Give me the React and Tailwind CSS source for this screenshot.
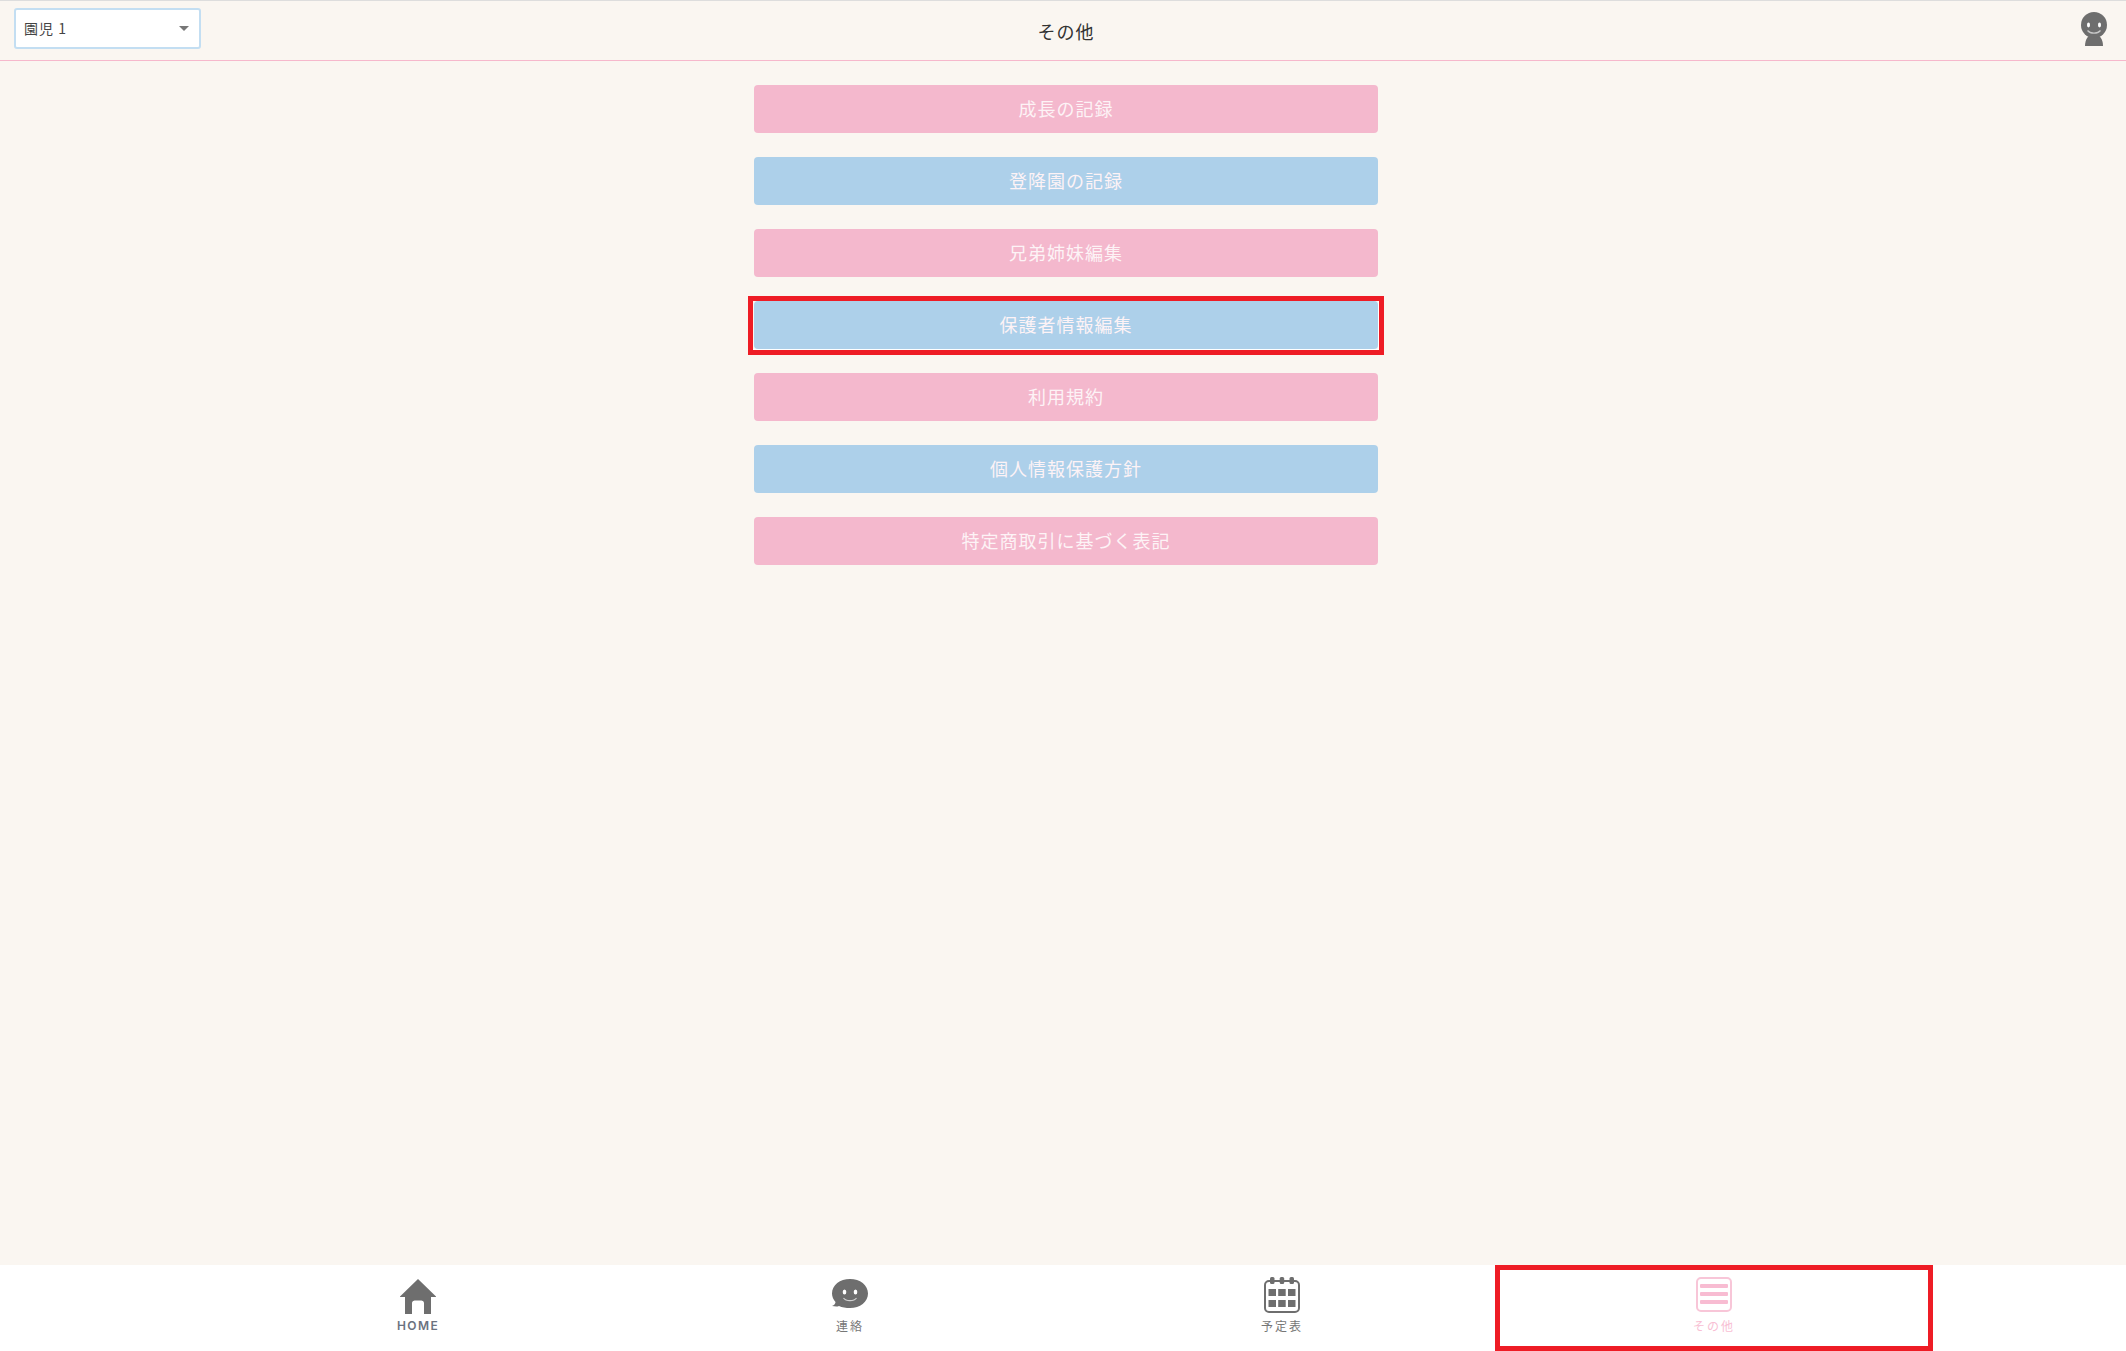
const FONT = "font-['Noto_Sans_CJK_JP','Noto_Sans',sans-serif]";

const buttons = [
  ["成長の記録", "pink"],
  ["登降園の記録", "blue"],
  ["兄弟姉妹編集", "pink"],
  ["保護者情報編集", "blue", true],
  ["利用規約", "pink"],
  ["個人情報保護方針", "blue"],
  ["特定商取引に基づく表記", "pink"],
];

function Avatar() {
  return (
    <svg width="28" height="36" viewBox="0 0 28 36" className="block">
      <path d="M5 34c0-6 3-12 9-12s9 6 9 12z" fill="#6e6e6e" />
      <circle cx="14" cy="13" r="13" fill="#6e6e6e" />
      <ellipse cx="8.5" cy="13" rx="1.5" ry="2.4" fill="#fff" />
      <ellipse cx="19.5" cy="13" rx="1.5" ry="2.4" fill="#fff" />
      <path d="M7.5 18.5c3 3.5 10 3.500 13 0" fill="none" stroke="#c8c8c8" strokeWidth="1.2" />
    </svg>
  );
}

function HomeIcon() {
  return (
    <svg width="36" height="36" viewBox="0 0 36 36" className="block">
      <path fillRule="evenodd" d="M18 0L36 17.5V18H31V35H5V18H0V17.5ZM12 35H24V24C24 22 22 21.500 20 21.500H16C14 21.500 12 22 12 24Z" fill="#6e6e6e" />
    </svg>
  );
}

function ChatIcon() {
  return (
    <svg width="36" height="36" viewBox="0 0 36 36" className="block">
      <path d="M18 1C28 1 36 7 36 15.500C36 24 28 30 18 30C14 30 10 29.500 7 28C5 28.800 3 28.500 0 28C2.500 27 3.500 25.500 3.500 24C1.300 21.500 0 18.700 0 15.500C0 7 8 1 18 1Z" fill="#6e6e6e" />
      <ellipse cx="12.500" cy="14" rx="1.800" ry="2.500" fill="#fff" />
      <ellipse cx="23.500" cy="14" rx="1.800" ry="2.500" fill="#fff" />
      <path d="M11.500 20C14 23.500 22 23.500 24.500 20" fill="none" stroke="#d0d0d0" strokeWidth="1.200" />
    </svg>
  );
}

function CalendarIcon() {
  const cells = [];
  for (const y of [12, 23]) for (const x of [4.5, 14.2, 24]) cells.push(<rect key={`${x}-${y}`} x={x} y={y} width="7.5" height="7" fill="#6e6e6e" />);
  return (
    <svg width="36" height="36" viewBox="0 0 36 36" className="block">
      <rect x="1" y="4" width="34" height="31" rx="4" fill="none" stroke="#6e6e6e" strokeWidth="2" />
      <rect x="6" y="0" width="4.500" height="7" rx="1.500" fill="#6e6e6e" />
      <rect x="15.700" y="0" width="4.500" height="7" rx="1.500" fill="#6e6e6e" />
      <rect x="25.500" y="0" width="4.500" height="7" rx="1.500" fill="#6e6e6e" />
      {cells}
    </svg>
  );
}

function MenuIcon() {
  return (
    <svg width="36" height="36" viewBox="0 0 36 36" className="block">
      <rect x="1" y="1" width="34" height="33" rx="4" fill="none" stroke="#f8c6d8" strokeWidth="2" />
      <rect x="4" y="7" width="28" height="4" rx="1" fill="#f8bcd2" />
      <rect x="4" y="15" width="28" height="4" rx="1" fill="#f8bcd2" />
      <rect x="4" y="23" width="28" height="4" rx="1" fill="#f8bcd2" />
    </svg>
  );
}

function NavItem({ label, icon, color, top, boxed, extra }) {
  return (
    <div className={`relative flex w-[432px] flex-col items-center ${top}`}>
      {icon}
      <span className={`absolute top-[52px] text-[12px] leading-[18px] ${color} ${extra || "tracking-[2px]"}`}>{label}</span>
      {boxed && <div className="pointer-events-none absolute -left-[3px] -right-[3px] top-0 h-[86px] border-[5px] border-[#ee1c25]" />}
    </div>
  );
}

export default function App() {
  return (
    <div className={`flex h-screen flex-col overflow-hidden bg-[#faf6f1] ${FONT}`}>
      <header className="relative flex h-[61px] shrink-0 items-center justify-center border-t border-b border-t-[#dddddd] border-b-[#f6b8cc] pl-[6px]">
        <div className="absolute left-[14px] top-[7px] flex h-[41px] w-[187px] items-center justify-between rounded-[3px] border-2 border-[#c3def2] bg-white pl-[8px] pr-[10px] text-[14px] tracking-[1px] text-[#444]">
          <span>園児 1</span>
          <span className="h-0 w-0 border-x-[5px] border-t-[5px] border-x-transparent border-t-[#777]" />
        </div>
        <h1 className="pt-[2px] text-[18px] font-normal tracking-[1px] text-[#333]">その他</h1>
        <div className="absolute right-[18px] top-[11px]"><Avatar /></div>
      </header>

      <main className="flex flex-1 flex-col items-center gap-6 pl-[6px] pt-6">
        {buttons.map(([label, tone, boxed]) => (
          <div key={label} className="relative w-[624px]">
            <div className={`flex h-12 items-center justify-center rounded-[4px] pb-[2px] text-[18px] tracking-[1px] text-[#fdf3f6] ${tone === "pink" ? "bg-[#f4b8cd]" : "bg-[#add0ea]"}`}>
              {label}
            </div>
            {boxed && (
              <div className="absolute -inset-x-[6px] -bottom-[6px] -top-[5px] border-[5px] border-[#ee1c25]">
                <div className="h-full w-full border-b border-r border-white" />
              </div>
            )}
          </div>
        ))}
      </main>

      <footer className="flex h-[86px] shrink-0 justify-center bg-white pl-[6px]">
        <NavItem label="HOME" icon={<HomeIcon />} color="text-[#6b7280] font-['Inter'] font-semibold" extra="tracking-[1.400px]" top="pt-[14px]" />
        <NavItem label="連絡" icon={<ChatIcon />} color="text-[#777]" top="pt-[13px]" />
        <NavItem label="予定表" icon={<CalendarIcon />} color="text-[#777]" top="pt-[12px]" />
        <NavItem label="その他" icon={<MenuIcon />} color="text-[#f8c0d4]" top="pt-[12px]" boxed />
      </footer>
    </div>
  );
}
